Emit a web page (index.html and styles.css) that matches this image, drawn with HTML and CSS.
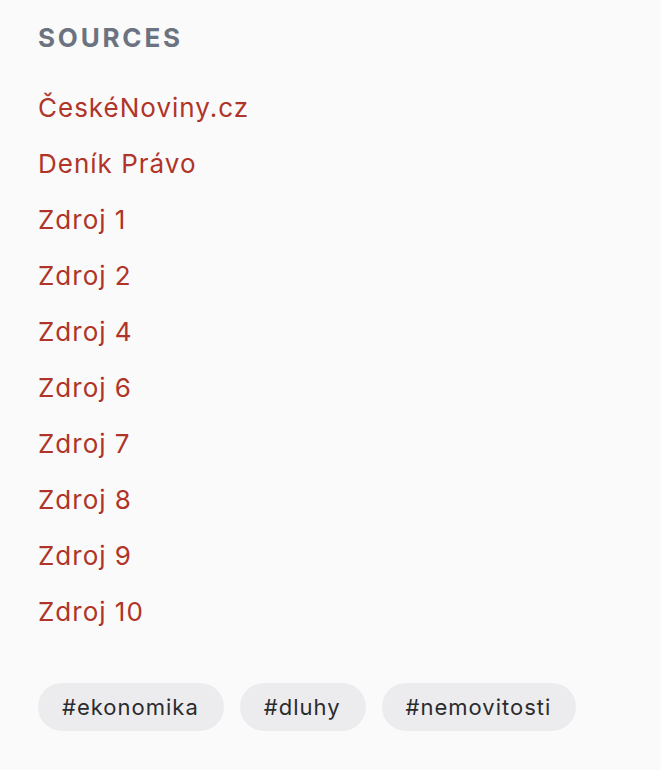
FILE: index.html
```html
<!DOCTYPE html>
<html lang="cs">
<head>
  <meta charset="UTF-8">
  <title>Sources</title>
  <link rel="stylesheet" href="styles.css">
</head>
<body>
  <div class="sources">
    <h2 class="sources-title">Sources</h2>
    <ul class="sources-list">
      <li><a href="#">ČeskéNoviny.cz</a></li>
      <li><a href="#">Deník Právo</a></li>
      <li><a href="#">Zdroj 1</a></li>
      <li><a href="#">Zdroj 2</a></li>
      <li><a href="#">Zdroj 4</a></li>
      <li><a href="#">Zdroj 6</a></li>
      <li><a href="#">Zdroj 7</a></li>
      <li><a href="#">Zdroj 8</a></li>
      <li><a href="#">Zdroj 9</a></li>
      <li><a href="#">Zdroj 10</a></li>
    </ul>
    <div class="tags">
      <span class="tag">#ekonomika</span>
      <span class="tag">#dluhy</span>
      <span class="tag">#nemovitosti</span>
    </div>
  </div>
</body>
</html>
```

FILE: styles.css
```css
body {
  margin: 0;
  background-color: #fafafa;
  font-family: Inter, "Noto Sans", sans-serif;
}
.sources {
  padding: 22px 38px;
}
.sources-title {
  margin: 0;
  font-size: 26px;
  line-height: 32px;
  font-weight: 700;
  letter-spacing: 2.8px;
  text-transform: uppercase;
  color: #6b7280;
}
.sources-list {
  list-style: none;
  margin: 26px 0 0;
  padding: 0;
}
.sources-list li {
  font-size: 26px;
  line-height: 56px;
  letter-spacing: 1px;
}
.sources-list a {
  color: #b03428;
  text-decoration: none;
}
.tags {
  display: flex;
  gap: 16px;
  margin-top: 43px;
}
.tag {
  padding: 10px 25px 10px 24px;
  font-size: 22px;
  line-height: 28px;
  letter-spacing: 1px;
  color: #2b2b2e;
  background-color: #ececee;
  border-radius: 999px;
}
```
